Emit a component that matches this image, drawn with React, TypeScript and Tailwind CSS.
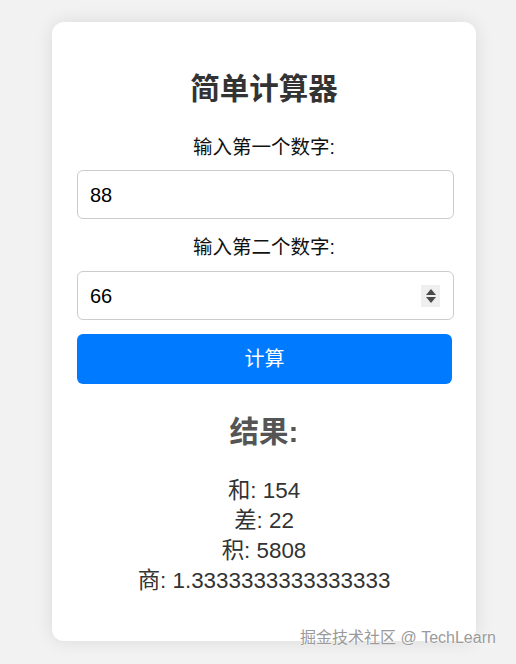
import React from "react";

const font = { fontFamily: '"Liberation Sans", Arial, "Noto Sans CJK SC", sans-serif' };

export default function App() {
  return (
    <div
      className="relative min-h-[664px] w-[516px] overflow-hidden bg-[#f2f2f2] pt-[22px] pl-[52px] [font-family:'Liberation_Sans','Noto_Sans_CJK_SC',sans-serif]"
    >
      <div className="flex w-[424px] flex-col items-center rounded-[12px] bg-white pt-[49px] pb-[45px] shadow-[0_0_18px_rgba(0,0,0,0.10)]">
        <h1 className="text-[29.5px] leading-[36px] font-bold text-[#333]">简单计算器</h1>
        <label className="mt-[28px] text-[19.5px] leading-[24px] text-[#111]">输入第一个数字:</label>
        <div className="mt-[11px] flex h-[49px] w-[377px] items-center self-start ml-[25px] rounded-[6px] border border-[#cccccc] bg-white pl-[12px] text-[20px] text-black">
          88
        </div>
        <label className="mt-[16px] text-[19.5px] leading-[24px] text-[#111]">输入第二个数字:</label>
        <div className="relative mt-[12px] flex h-[49px] w-[377px] items-center self-start ml-[25px] rounded-[6px] border border-[#cccccc] bg-white pl-[12px] text-[20px] text-black">
          66
          <div className="absolute right-[13px] top-[13px] flex h-[22px] w-[19px] flex-col items-center justify-center gap-[2px] bg-[#efefef]">
            <svg width="10" height="6" viewBox="0 0 10 6"><polygon points="5,0 10,6 0,6" fill="#4a4a4a" /></svg>
            <svg width="10" height="6" viewBox="0 0 10 6"><polygon points="0,0 10,0 5,6" fill="#4a4a4a" /></svg>
          </div>
        </div>
        <button className="mt-[14px] flex h-[50px] w-[375px] items-center justify-center self-start ml-[25px] rounded-[6px] bg-[#007bff] text-[20px] text-white">
          计算
        </button>
        <h2 className="mt-[30px] text-[29.5px] leading-[36px] font-bold text-[#555]">结果:</h2>
        <div className="mt-[26px] flex flex-col items-center text-[22.4px] leading-[30px] text-[#333]">
          <p>和: 154</p>
          <p>差: 22</p>
          <p>积: 5808</p>
          <p>商: 1.3333333333333333</p>
        </div>
      </div>
      <div
        className="absolute left-[300px] top-[627px] text-[16px] leading-[22px] text-[#9a9a9a] [text-shadow:0_0_2px_#fff,0_0_1px_#fff]"
        style={font}
      >
        掘金技术社区 @ TechLearn
      </div>
    </div>
  );
}
